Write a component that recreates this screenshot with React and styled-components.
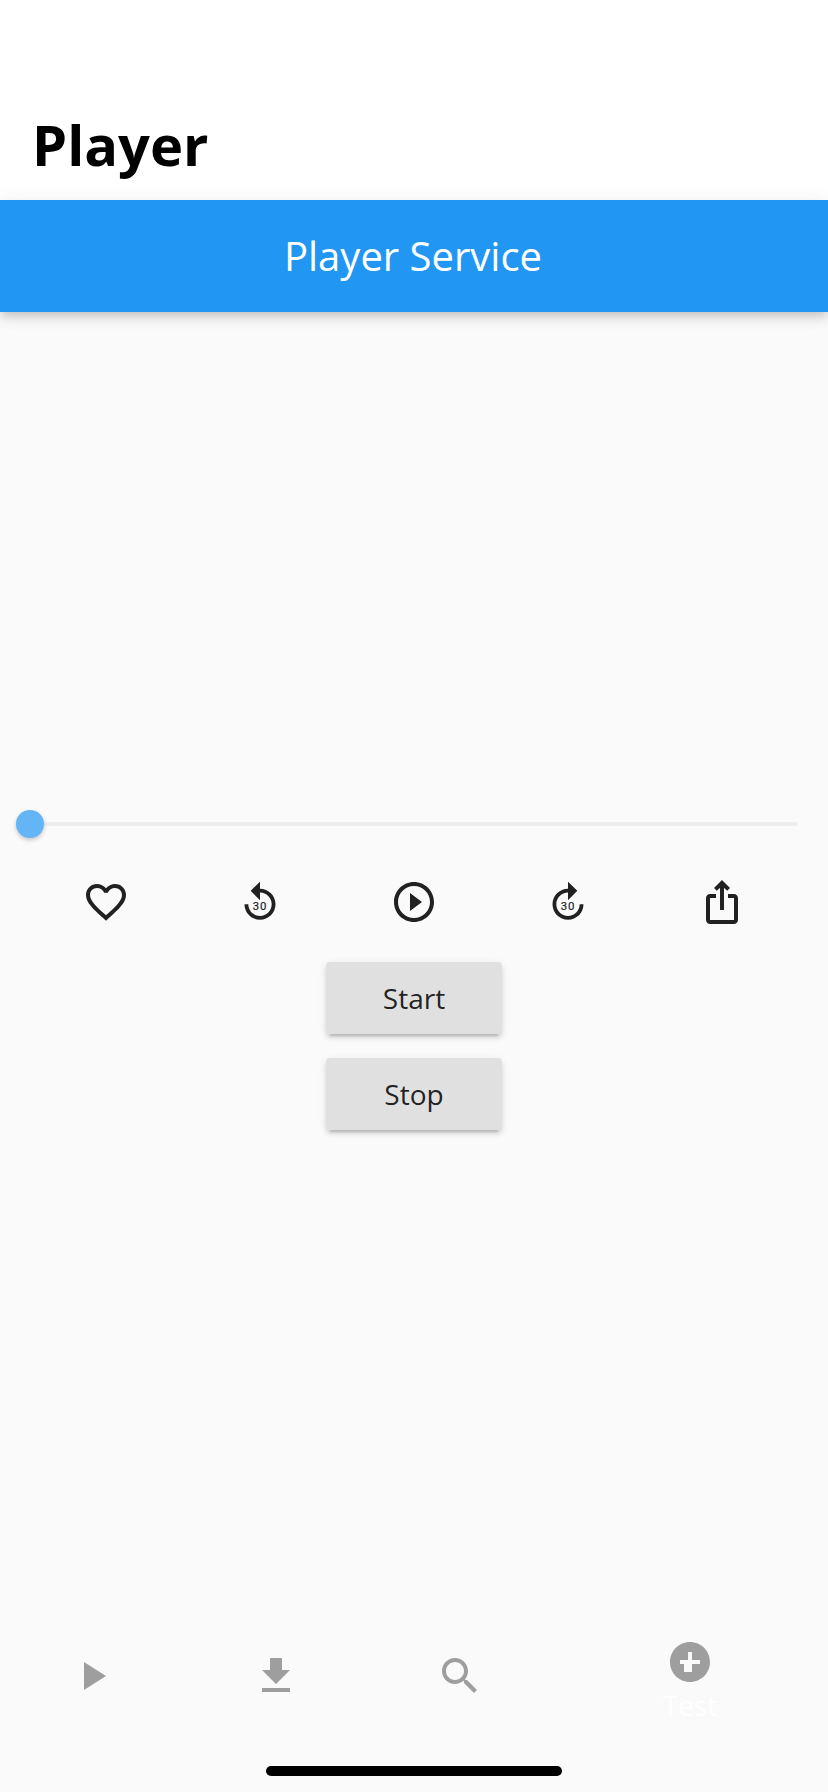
import React from "react";
import styled, { createGlobalStyle } from "styled-components";

const Global = createGlobalStyle`
  html, body { margin: 0; padding: 0; background: #fafafa; }
  body { font-family: "Open Sans", "Noto Sans", sans-serif; }
  button { font-family: inherit; }
`;

const Page = styled.div`
  width: 828px;
  height: 1792px;
  display: flex;
  flex-direction: column;
  background: #fafafa;
  overflow: hidden;
`;
const LargeHeader = styled.header`
  height: 200px;
  box-sizing: border-box;
  background: #fff;
  display: flex;
  align-items: flex-end;
  padding: 0 32px 18px;
`;
const LargeTitle = styled.h1`
  margin: 0;
  font-size: 56px;
  line-height: 76px;
  font-weight: 700;
  color: #000;
`;
const AppBar = styled.div`
  height: 112px;
  box-sizing: border-box;
  padding: 0 2px 2px 0;
  flex: none;
  background: #2196f3;
  color: #fff;
  display: flex;
  align-items: center;
  justify-content: center;
  font-size: 40px;
  font-weight: 400;
  box-shadow: 0 8px 10px rgba(0,0,0,.08), 0 2px 20px rgba(0,0,0,.07), 0 4px 8px -2px rgba(0,0,0,.12);
  position: relative;
  z-index: 1;
`;
const Body = styled.main`
  flex: 1;
  display: flex;
  flex-direction: column;
  align-items: stretch;
  padding-top: 498px;
`;
const Slider = styled.div`
  position: relative;
  height: 28px;
  margin: 0 30px;
  display: flex;
  align-items: center;
`;
const Track = styled.div`
  flex: 1;
  height: 4px;
  border-radius: 0 2px 2px 0;
  background: #eeeeee;
`;
const Thumb = styled.div`
  position: absolute;
  left: -14px;
  top: 0;
  width: 28px;
  height: 28px;
  border-radius: 50%;
  background: #64b5f6;
  box-shadow: 0 2px 4px rgba(0,0,0,.22);
`;
const Controls = styled.div`
  display: grid;
  grid-template-columns: repeat(5, 154px);
  padding: 0 29px;
  margin-top: 40px;
  justify-items: center;
`;
const ControlIcon = styled.svg`
  display: block;
  width: 48px;
  height: 48px;
  fill: #212121;
`;
const SkipLabel = styled.text`
  font-family: "Roboto", sans-serif;
  font-size: 5.7px;
  font-weight: 400;
  letter-spacing: .45px;
  fill: #212121;
  stroke: #212121;
  stroke-width: .08px;
  text-anchor: middle;
`;
const Actions = styled.div`
  display: flex;
  flex-direction: column;
  align-items: center;
  gap: 24px;
  margin-top: 36px;
`;
const ActionButton = styled.button`
  width: 176px;
  height: 72px;
  border: 0;
  border-radius: 4px;
  padding: 0;
  background: #e0e0e0;
  color: rgba(0, 0, 0, .87);
  font-size: 28px;
  box-shadow: 0 4px 4px rgba(0,0,0,.1), 0 6px 2px -4px rgba(0,0,0,.14), 0 2px 10px rgba(0,0,0,.08);
`;
const BottomNav = styled.nav`
  height: 112px;
  flex: none;
  display: flex;
`;
const Tab = styled.div`
  flex: ${(p) => (p.$active ? 1.5 : 1)};
  display: flex;
  flex-direction: column;
  align-items: center;
  padding-top: ${(p) => (p.$active ? 26 : 40)}px;
`;
const TabIcon = styled.svg`
  display: block;
  width: 48px;
  height: 48px;
  fill: #9e9e9e;
  flex: none;
`;
const TabLabel = styled.span`
  color: #fff;
  font-size: 28px;
  line-height: 38px;
`;
const SafeArea = styled.div`
  height: 68px;
  flex: none;
  display: flex;
  justify-content: center;
  padding-top: 42px;
  box-sizing: border-box;
`;
const HomeIndicator = styled.div`
  width: 296px;
  height: 10px;
  border-radius: 5px;
  background: #000;
`;

const Icon24 = ({ as: C, d, children }) => (
  <C viewBox="0 0 24 24">
    {d && <path d={d} />}
    {children}
  </C>
);

const paths = {
  heart: "M16.5 3c-1.74 0-3.41.81-4.5 2.09C10.91 3.81 9.24 3 7.5 3 4.42 3 2 5.42 2 8.5c0 3.78 3.4 6.86 8.55 11.54L12 21.35l1.45-1.32C18.6 15.36 22 12.28 22 8.5 22 5.42 19.58 3 16.5 3zm-4.4 15.55l-.1.1-.1-.1C7.14 14.24 4 11.39 4 8.5 4 6.5 5.5 5 7.5 5c1.54 0 3.04.99 3.57 2.36h1.87C13.46 5.99 14.96 5 16.5 5c2 0 3.5 1.5 3.5 3.5 0 2.89-3.14 5.74-7.9 10.05z",
  replay: "M12 5.35V1.85L7.35 6.4l4.65 4.7V7.25c3.23 0 5.85 2.62 5.85 5.85s-2.62 5.85-5.85 5.85-5.85-2.62-5.85-5.85H4.25c0 4.28 3.47 7.75 7.75 7.75s7.75-3.47 7.75-7.75-3.47-7.75-7.75-7.75z",
  forward: "M12 5.35V1.85l4.65 4.55L12 11.1V7.25c-3.23 0-5.85 2.62-5.85 5.85s2.62 5.85 5.85 5.85 5.85-2.62 5.85-5.85h1.9c0 4.28-3.47 7.75-7.75 7.75s-7.75-3.47-7.75-7.75 3.47-7.75 7.75-7.75z",
  play: "M10 16.5l6-4.5-6-4.5v9zM12 2C6.48 2 2 6.48 2 12s4.48 10 10 10 10-4.48 10-10S17.52 2 12 2zm0 18c-4.41 0-8-3.59-8-8s3.59-8 8-8 8 3.59 8 8-3.59 8-8 8z",
  share: "M16 5l-1.42 1.42-1.59-1.59V16h-1.98V4.83L9.42 6.42 8 5l4-4 4 4zm4 5v11c0 1.1-.9 2-2 2H6c-1.11 0-2-.9-2-2V10c0-1.11.89-2 2-2h3v2H6v11h12V10h-3V8h3c1.1 0 2 .89 2 2z",
  tabPlay: "M8 5v14l11-7z",
  download: "M19 9h-4V3H9v6H5l7 7 7-7zM5 18v2h14v-2H5z",
  search: "M15.5 14h-.79l-.28-.27C15.41 12.59 16 11.11 16 9.5 16 5.91 13.09 3 9.5 3S3 5.91 3 9.5 5.91 16 9.5 16c1.61 0 3.09-.59 4.23-1.57l.27.28v.79l5 4.99L20.49 19l-4.99-5zm-6 0C7.01 14 5 11.99 5 9.5S7.01 5 9.5 5 14 7.01 14 9.5 11.99 14 9.5 14z",
  add: "M12 2C6.48 2 2 6.48 2 12s4.48 10 10 10 10-4.48 10-10S17.52 2 12 2zm5 11h-4v4h-4v-4H7v-2h4V7h2v4h4v2z",
};

export default function App() {
  return (
    <Page>
      <Global />
      <LargeHeader>
        <LargeTitle>Player</LargeTitle>
      </LargeHeader>
      <AppBar>Player Service</AppBar>
      <Body>
        <Slider>
          <Track />
          <Thumb />
        </Slider>
        <Controls>
          <Icon24 as={ControlIcon} d={paths.heart} />
          <Icon24 as={ControlIcon} d={paths.replay}>
            <SkipLabel x="12" y="16">30</SkipLabel>
          </Icon24>
          <Icon24 as={ControlIcon} d={paths.play} />
          <Icon24 as={ControlIcon} d={paths.forward}>
            <SkipLabel x="12" y="16">30</SkipLabel>
          </Icon24>
          <Icon24 as={ControlIcon} d={paths.share} />
        </Controls>
        <Actions>
          <ActionButton>Start</ActionButton>
          <ActionButton>Stop</ActionButton>
        </Actions>
      </Body>
      <BottomNav>
        <Tab><Icon24 as={TabIcon} d={paths.tabPlay} /></Tab>
        <Tab><Icon24 as={TabIcon} d={paths.download} /></Tab>
        <Tab><Icon24 as={TabIcon} d={paths.search} /></Tab>
        <Tab $active>
          <Icon24 as={TabIcon} d={paths.add} />
          <TabLabel>Test</TabLabel>
        </Tab>
      </BottomNav>
      <SafeArea>
        <HomeIndicator />
      </SafeArea>
    </Page>
  );
}
